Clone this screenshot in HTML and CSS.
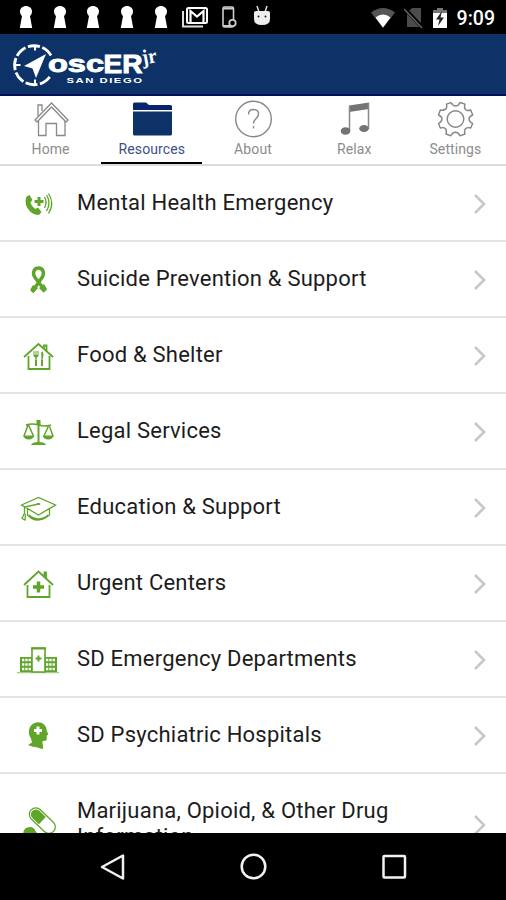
FILE: index.html
```html
<!DOCTYPE html>
<html lang="en">
<head>
    <meta charset="UTF-8">
    <meta name="viewport" content="width=device-width, initial-scale=1.0">
    <title>oscER jr San Diego</title>
    <link rel="stylesheet" href="styles.css">
</head>
<body>
    <!-- shared symbols -->
    <svg class="defs" width="0" height="0">
        <symbol id="keyhole" viewBox="0 0 14 24">
            <path d="M7 1C3.700 1 1 3.300 1 6.500c0 2 1 3.600 2 4.500L.8 23h12.400L11 11C12 10.100 13 8.500 13 6.500 13 3.300 10.300 1 7 1z"/>
        </symbol>
        <symbol id="chevron" viewBox="0 0 14 22">
            <path d="M2 2l9 9-9 9" fill="none" stroke="#c7c7c7" stroke-width="2.600"/>
        </symbol>
    </svg>

    <div class="phone">
        <div class="status-bar">
            <div class="notifications">
                <svg class="keyhole"><use href="#keyhole"/></svg>
                <svg class="keyhole"><use href="#keyhole"/></svg>
                <svg class="keyhole"><use href="#keyhole"/></svg>
                <svg class="keyhole"><use href="#keyhole"/></svg>
                <svg class="keyhole"><use href="#keyhole"/></svg>
                <svg class="mail" width="28" height="24" viewBox="0 0 28 24">
                    <path d="M2 6v15.500h20" fill="none" stroke="#ddd" stroke-width="2"/>
                    <rect x="6" y="3" width="20" height="15" rx="1.500" fill="none" stroke="#fff" stroke-width="2"/>
                    <path d="M9.500 17V6l6.500 5.500L22.500 6v11" fill="none" stroke="#fff" stroke-width="2.200"/>
                </svg>
                <svg class="device" width="16" height="24" viewBox="0 0 16 24">
                    <rect x="2" y="2" width="10.500" height="20" rx="1.500" fill="none" stroke="#ccc" stroke-width="1.600"/>
                    <path d="M2 3.500h10M2 21h10" stroke="#ccc" stroke-width="2"/>
                    <circle cx="11.500" cy="18" r="3.200" fill="#000" stroke="#ccc" stroke-width="1.800"/>
                </svg>
                <svg class="droid" width="18" height="22" viewBox="0 0 18 22">
                    <path d="M4 1l2 6M14 1l-2 6" stroke="#ddd" stroke-width="1.500"/>
                    <path d="M1 7.500Q1 6 3 6h12q2 0 2 1.500V14q0 6-8 6t-8-6z" fill="#eee"/>
                    <circle cx="5.500" cy="11.500" r="1" fill="#222"/>
                    <circle cx="12.500" cy="11.500" r="1" fill="#222"/>
                </svg>
            </div>
            <div class="system">
                <svg width="26" height="22" viewBox="0 0 26 22">
                    <path d="M1 5.500Q13-3.500 25 5.500L13 21z" fill="#555"/>
                    <path d="M5.500 10.500Q13 4.500 20.500 10.500L13 20.500z" fill="#fff"/>
                </svg>
                <svg width="20" height="22" viewBox="0 0 20 22">
                    <path d="M3 6l5-5h9v19H3z" fill="#4c4c4c"/>
                    <path d="M1 2l17 18" stroke="#000" stroke-width="4"/>
                    <path d="M0 2l18 19" stroke="#666" stroke-width="1.500"/>
                </svg>
                <svg class="battery" width="16" height="22" viewBox="0 0 16 22">
                    <path d="M1 3h4V1h6v2h4v6H1z" fill="#777"/>
                    <path d="M1 6h14v15H1z" fill="#fff"/>
                    <path d="M10 4L4 12.500h3.500L6 19l6-8.500H8.500z" fill="#222"/>
                </svg>
                <span class="time">9:09</span>
            </div>
        </div>

        <header class="header">
            <svg class="logo" width="150" height="54" viewBox="10 38 150 54">
                <path d="M51 55.500A19.500 19.500 0 1 0 51 75" fill="none" stroke="#fff" stroke-width="2.800" stroke-dasharray="12 2.500"/>
                <path d="M35 46v4.500M35 79.500V84M16 65h4.500" stroke="#fff" stroke-width="2"/>
                <path d="M46 54L24 66l8.500 2.500L36 78z" fill="#fff"/>
                <g class="wordmark">
                    <text x="48" y="71.500" font-size="23" textLength="56" lengthAdjust="spacingAndGlyphs">osc</text>
                    <text x="103.500" y="73" font-size="25" textLength="39" lengthAdjust="spacingAndGlyphs">ER</text>
                </g>
                <text class="jr" x="143" y="64.500" font-size="21" textLength="15" lengthAdjust="spacingAndGlyphs" transform="rotate(-10 143 65)">jr</text>
                <text class="city" x="66.500" y="83" font-size="7.500" textLength="77" lengthAdjust="spacingAndGlyphs">SAN DIEGO</text>
            </svg>
        </header>

        <nav class="tabs">
            <a class="tab">
                <svg width="40" height="40" viewBox="0 0 40 40" fill="none" stroke="#888" stroke-width="1.300">
                    <path d="M4 21L20.500 4 37 21l-2 2L20.500 8 6 23z"/>
                    <path d="M7.500 22v14.500H15v-12h10.500v12H34V22M7 17V6h4v6"/>
                </svg>
                <span>Home</span>
            </a>
            <a class="tab active">
                <svg width="40" height="40" viewBox="0 0 40 40">
                    <path d="M1 5q0-1.500 1.500-1.500H14l3 2.500h21.500q1.500 0 1.500 1.500V11H1z" fill="#08256a"/>
                    <path d="M1 12.500h39V35q0 1.500-1.500 1.500h-36Q1 36.500 1 35z" fill="#0c3268"/>
                </svg>
                <span>Resources</span>
            </a>
            <a class="tab">
                <svg width="40" height="40" viewBox="0 0 40 40" fill="none" stroke="#888" stroke-width="1.400">
                    <circle cx="20.500" cy="20" r="17.800"/>
                    <path d="M15.500 15.500c0-3.300 2.200-5 5-5s5 1.800 5 4.700c0 4.300-5 4.400-5 9.300M20.500 27v2.500"/>
                </svg>
                <span>About</span>
            </a>
            <a class="tab">
                <svg width="40" height="40" viewBox="0 0 40 40" fill="#747474">
                    <path d="M15 6.500L35 3.500v6.500l-20 3z"/>
                    <path d="M15.500 7v25M34.500 4v26" stroke="#888" stroke-width="1.500"/>
                    <ellipse cx="11.500" cy="32" rx="4.800" ry="3.800"/>
                    <ellipse cx="30" cy="29.500" rx="4.800" ry="3.500"/>
                </svg>
                <span>Relax</span>
            </a>
            <a class="tab">
                <svg width="40" height="40" viewBox="0 0 40 40" fill="none" stroke="#858585" stroke-width="1.400" stroke-linejoin="round">
                    <path d="M16 3.600L11.500 5.200Q12.500 9.800 9.800 10.500 7 11.800 5.300 11L3.500 16Q7 17.500 7 20T3.500 24.500L5.300 29Q9 28 10.500 29.800 12 31.500 11 35l4.800 1.800Q17.500 33.300 20.500 33.300t4.500 3.500L30 35Q28.700 31.500 30.500 29.800 32.300 28 35.700 29l2-4.500Q34 22.500 34 20t3.700-4L35.700 11Q32.300 12.300 30.500 10.500 28.700 8.500 30 5.200L25 3.500Q23.500 7 20.500 7 18 7 16 3.600z"/>
                    <circle cx="20.500" cy="20" r="8.300"/>
                </svg>
                <span>Settings</span>
            </a>
        </nav>

        <main class="list">
            <a class="row">
                <svg class="icon" viewBox="0 0 48 40">
                    <path d="M12.500 12.500l3-1.500 3 5-2.200 2.500q1.500 4.500 5 6.500l2.700-1.500 3.500 4.500-2 2.500q-4 1.500-9-2.500-7-7-4-15.500z"/>
                    <path d="M25 13v9M20.500 17.500h9" stroke-width="3"/>
                    <path class="line" d="M30.500 13q3 5.500 0 11M32.500 11q5 8 0 16M34.500 9.500q6.500 10 0 20"/>
                </svg>
                <span class="label">Mental Health Emergency</span>
                <svg class="chevron"><use href="#chevron"/></svg>
            </a>
            <a class="row">
                <svg class="icon" viewBox="0 0 48 40">
                    <path class="line" stroke-width="3.500" d="M18 32l10-14.500c3-4.500 1-9.500-3.500-9.500s-6.500 5-3.500 9.500L31.500 31"/>
                    <path d="M16 30l3-5 5 3-5 5.500-.5-3zM33 29l-3-5-5 4 5 5 .5-3z"/>
                </svg>
                <span class="label">Suicide Prevention &amp; Support</span>
                <svg class="chevron"><use href="#chevron"/></svg>
            </a>
            <a class="row">
                <svg class="icon" viewBox="0 0 48 40">
                    <path class="line" stroke-width="1.800" d="M10 21L24.500 8 39 21M30 12V9.500h2.500v5.500M14.500 20v13h21V20"/>
                    <path class="line" d="M22 20v10M28 16v14"/>
                    <path d="M19.500 15h1v4h1v-4h1v4h1v-4h1v5q-2.500 3-5 0zM28 15q3 3.500 0 8zM21 24h2v6h-2zM27 24h2v6h-2z"/>
                </svg>
                <span class="label">Food &amp; Shelter</span>
                <svg class="chevron"><use href="#chevron"/></svg>
            </a>
            <a class="row">
                <svg class="icon" viewBox="0 0 48 40">
                    <path class="line" stroke-width="2" d="M24.500 9v22"/>
                    <path class="line" stroke-width="1.500" d="M12 13q6-2 12.500 0t12.500 0M14 13l-4 11M14.500 13l5 11M35 13l-5 11M35 13l4 11"/>
                    <path d="M22.500 8h4v5h-4zM9 23.500h11.500q-1.500 4-5.800 4T9 23.500zM28.500 23.500H40q-1.500 4-5.800 4t-5.700-4zM17 33q1-3 7.500-3t7.500 3z"/>
                </svg>
                <span class="label">Legal Services</span>
                <svg class="chevron"><use href="#chevron"/></svg>
            </a>
            <a class="row">
                <svg class="icon" viewBox="0 0 48 40">
                    <path class="line" d="M7.500 17L24.500 9.500 41.500 17 24.500 27zM13.500 21v6q9.500 10 22 0v-6M24.500 16L10.500 19v7M10.500 25l-2.500 5.500 3 1.500.500-6M15 27q10 8 19 0"/>
                    <ellipse cx="24.500" cy="16" rx="2" ry="1"/>
                </svg>
                <span class="label">Education &amp; Support</span>
                <svg class="chevron"><use href="#chevron"/></svg>
            </a>
            <a class="row">
                <svg class="icon" viewBox="0 0 48 40">
                    <path class="line" stroke-width="1.800" d="M10 21L24.500 7.500 39 21M30.500 12V8.500H32V14M13.500 21v12h22V21"/>
                    <path d="M24.500 17.500v11M19 23h11" stroke-width="3.500"/>
                </svg>
                <span class="label">Urgent Centers</span>
                <svg class="chevron"><use href="#chevron"/></svg>
            </a>
            <a class="row">
                <svg class="icon" viewBox="0 0 48 40">
                    <path d="M6 17h12v15H6zM31 17h12v15H31z"/>
                    <path d="M8 20h9M8 24.500h9M8 29h9M32 20h9M32 24.500h9M32 29h9" stroke="#fff" stroke-width="2.300" stroke-dasharray="2.300 1"/>
                    <path d="M18 8h13v24H18z" fill="#fff" stroke-width="1.600"/>
                    <path d="M17 8.500h15" stroke-width="2"/>
                    <path d="M24.500 15.500v6M21.500 18.500h6" stroke-width="2"/>
                    <path d="M3 32.700h42" stroke-width=".7"/>
                </svg>
                <span class="label">SD Emergency Departments</span>
                <svg class="chevron"><use href="#chevron"/></svg>
            </a>
            <a class="row">
                <svg class="icon" viewBox="0 0 48 40">
                    <path d="M17 22.500c-4-6-2-13 3-15.300 6-2.700 12.500.8 12.700 7.300l1.600 4.200-1.600.8v4.500q-.5 1-4.200 1v2.500q1 2.500.5 5.500-4-.5-6-1.700-3 .2-9-2.300l4-2.500z"/>
                    <path d="M24 10.500v8M20 14.500h8" stroke="#fff" stroke-width="3"/>
                </svg>
                <span class="label">SD Psychiatric Hospitals</span>
                <svg class="chevron"><use href="#chevron"/></svg>
            </a>
            <a class="row">
                <svg class="icon" viewBox="0 0 48 40">
                    <g transform="rotate(44 28 16)">
                        <rect class="line" x="12.500" y="9" width="31" height="13" rx="6.500"/>
                        <path d="M28 10.500H19a5 5 0 0 0 0 10h9z"/>
                    </g>
                    <path d="M9 30q0-8 7-8 4 0 5.500 4l3 4-8 8z"/>
                </svg>
                <span class="label">Marijuana, Opioid, &amp; Other Drug Information</span>
                <svg class="chevron"><use href="#chevron"/></svg>
            </a>
        </main>

        <div class="nav-bar">
            <svg width="28" height="28" viewBox="0 0 28 28"><path d="M3 14L24 2.500v23z"/></svg>
            <svg width="28" height="28" viewBox="0 0 28 28"><circle cx="14.500" cy="13.500" r="11.800"/></svg>
            <svg width="28" height="28" viewBox="0 0 28 28"><rect x="3.500" y="3" width="21.500" height="21.500" rx="1"/></svg>
        </div>
    </div>
</body>
</html>
```
FILE: styles.css
```css
* {
    box-sizing: border-box;
}
body {
    margin: 0;
    font-family: Roboto, "Liberation Sans", sans-serif;
    background-color: #fff;
}
svg {
    display: block;
    flex: none;
}
.defs {
    position: absolute;
}
.phone {
    display: flex;
    flex-direction: column;
    width: 506px;
    height: 900px;
    overflow: hidden;
}

/* status bar */
.status-bar {
    flex: none;
    display: flex;
    justify-content: space-between;
    height: 34px;
    padding: 5px 11px 0 19px;
    background-color: #000;
    color: #fff;
}
.notifications {
    display: flex;
}
.keyhole {
    width: 14px;
    height: 24px;
    margin-right: 19.700px;
    fill: #fff;
}
.mail {
    margin-left: -6px;
}
.device {
    margin-left: 12px;
}
.droid {
    margin-left: 16px;
}
.system {
    display: flex;
    padding-top: 2px;
}
.system svg + svg {
    margin-left: 8px;
}
.system .battery {
    margin-left: 8px;
}
.time {
    margin-left: 9px;
    font-size: 19.500px;
    font-weight: 500;
    line-height: 23px;
}

/* header */
.header {
    flex: none;
    height: 62px;
    padding: 4px 10px 0;
    background-color: #0c3268;
    border-bottom: 2px solid #05105a;
}
.logo text {
    fill: #fff;
}
.wordmark {
    font-family: "Liberation Sans", Arial, sans-serif;
    font-weight: bold;
}
.wordmark text {
    stroke: #fff;
    stroke-width: 0.9px;
}
.jr {
    font-family: "Liberation Serif", serif;
    font-weight: bold;
}
.city {
    font-family: "Liberation Sans", Arial, sans-serif;
    font-weight: bold;
    letter-spacing: 1px;
}

/* tabs */
.tabs {
    flex: none;
    display: flex;
    height: 70px;
    border-bottom: 2px solid #dcdcdc;
}
.tab {
    flex: 1;
    display: flex;
    flex-direction: column;
    align-items: center;
    padding-top: 3px;
    font-size: 14px;
    line-height: 18px;
    letter-spacing: 0.100px;
    color: #8c8c8c;
}
.tab.active {
    color: #3c5088;
    border-bottom: 2px solid #000;
}
.tab span {
    margin-top: 1px;
}

/* resource list */
.list {
    flex: 1;
    min-height: 0;
    overflow: hidden;
}
.row {
    display: flex;
    align-items: center;
    min-height: 76px;
    padding: 0 19px 0 14px;
    border-bottom: 2px solid #e4e4e4;
}
.icon {
    width: 48px;
    height: 40px;
    margin-top: 2px;
    fill: #5fa52a;
    stroke: #5fa52a;
    stroke-width: 0;
}
.icon .line {
    fill: none;
}
.icon .line:not([stroke-width]) {
    stroke-width: 1.300px;
}
.label {
    flex: 1;
    padding: 24px 20px 24px 15px;
    font-size: 22px;
    line-height: 26px;
    letter-spacing: 0.220px;
    color: #1c1c1c;
}
.chevron {
    width: 14px;
    height: 22px;
    margin-top: 2px;
}

/* android navigation */
.nav-bar {
    flex: none;
    display: flex;
    justify-content: center;
    align-items: center;
    gap: 112.500px;
    height: 67px;
    background-color: #000;
}
.nav-bar svg {
    fill: none;
    stroke: #f2f2f2;
    stroke-width: 2.500px;
    stroke-linejoin: round;
}
```
